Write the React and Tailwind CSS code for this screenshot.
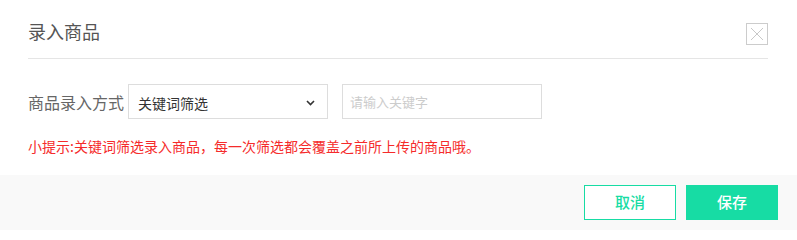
import { useState } from "react";

const FONT = `"Noto Sans CJK SC", "Liberation Sans", sans-serif`;

export default function App() {
  const [keyword, setKeyword] = useState("");

  return (
    <div className="w-[797px] h-[230px] bg-white flex flex-col" style={{ fontFamily: FONT }}>
      <div className="mx-[28px] mr-[29px] h-[59px] border-b border-[#e5e5e5] flex items-center justify-between">
        <h2 className="text-[18px] leading-none text-[#555] pt-[4px]">录入商品</h2>
        <button className="w-[22px] h-[22px] border border-[#ccc] flex items-center justify-center mt-[10px]">
          <svg width="14" height="14" viewBox="0 0 14 14">
            <path d="M1 1L13 13M13 1L1 13" stroke="#c8c8c8" strokeWidth="1" />
          </svg>
        </button>
      </div>

      <div className="px-[28px] pt-[25px] flex-1">
        <div className="flex items-center">
          <span className="text-[16px] text-[#666] w-[100px] leading-none">商品录入方式</span>
          <div className="w-[200px] h-[35px] border border-[#ddd] flex items-center justify-between pl-[9px] pr-[12px]">
            <span className="text-[14px] text-[#333] pt-[4px]">关键词筛选</span>
            <svg width="9" height="6" viewBox="0 0 9 6" className="mt-[2px]">
              <path d="M1 1L4.5 4.5L8 1" stroke="#333" strokeWidth="1.6" fill="none" />
            </svg>
          </div>
          <input
            value={keyword}
            onChange={(e) => setKeyword(e.target.value)}
            placeholder="请输入关键字"
            className="ml-[14px] w-[200px] h-[35px] border border-[#ddd] px-[7px] text-[13px] text-[#333] placeholder:text-[#ccc] outline-none"
          />
        </div>
        <p className="mt-[17px] text-[14px] leading-[20px] text-[#f52b2b]">
          小提示:关键词筛选录入商品，每一次筛选都会覆盖之前所上传的商品哦。
        </p>
      </div>

      <div className="h-[55px] bg-[#f9f9f9] flex items-center justify-end gap-[10px] pr-[19px]">
        <button className="w-[92px] h-[35px] border border-[#17dca4] bg-white text-[#17dca4] text-[15px] font-medium">
          取消
        </button>
        <button className="w-[92px] h-[35px] bg-[#17dca4] text-white text-[15px] font-medium">
          保存
        </button>
      </div>
    </div>
  );
}
